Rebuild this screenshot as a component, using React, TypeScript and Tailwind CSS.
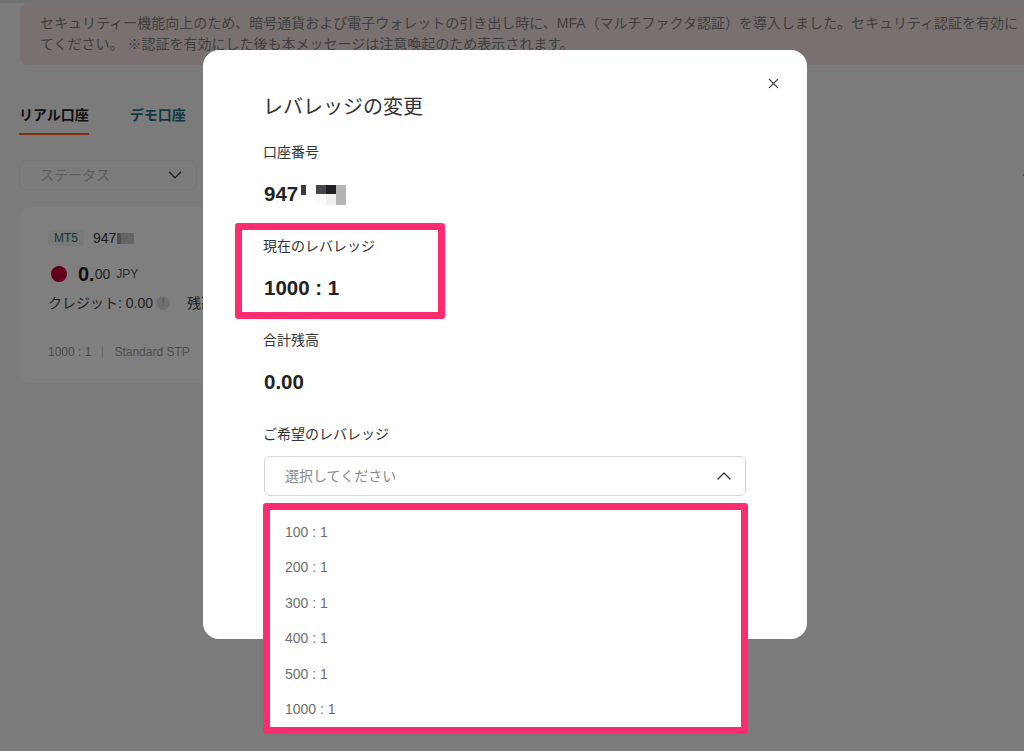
import { ChevronDown, ChevronUp, Plus, X } from 'lucide-react';

const leverageOptions = ['100 : 1', '200 : 1', '300 : 1', '400 : 1', '500 : 1', '1000 : 1'];

function AccountCard() {
  return (
    <div className="mt-[17px] ml-[19px] h-[176px] w-[500px] rounded-xl bg-white pt-[21px] pl-[29px]">
      <div className="flex items-center">
        <span className="flex h-[16px] w-[36px] items-center justify-center rounded-sm bg-[#f0f2f2] text-xs text-[#2f6f7d]">
          MT5
        </span>
        <span className="ml-[9px] text-sm text-[#333]">947</span>
        <span className="ml-[1px] flex h-[11px] w-[17px] bg-[#c8c8c8]">
          <span className="h-full w-1 bg-[#a0a0a0]" />
        </span>
      </div>
      <div className="mt-[14px] flex items-center">
        <span className="ml-[3px] size-4 rounded-full bg-[#c6003d]" />
        <span className="ml-[11px] text-xl leading-6 font-bold text-[#222]">0.</span>
        <span className="text-sm leading-6 text-[#444]">00</span>
        <span className="ml-[6px] text-xs leading-6 text-[#555]">JPY</span>
      </div>
      <div className="mt-[7px] flex items-center text-sm leading-5 text-[#444]">
        <span>クレジット: 0.00</span>
        <span className="ml-[3px] flex size-[14px] items-center justify-center rounded-full bg-[#e0e0e0] text-[10px] text-[#999]">
          !
        </span>
        <span className="ml-[17px]">残高: 0.00</span>
      </div>
      <div className="mt-[29px] flex items-center text-xs leading-5 text-[#999]">
        <span>1000 : 1</span>
        <span className="mx-[11px] h-3 w-px bg-[#ddd]" />
        <span>Standard STP</span>
      </div>
    </div>
  );
}

function MaskedNumber() {
  return (
    <div className="mt-[2px] ml-[3px] flex items-start">
      <div className="h-[10px] w-[5px] bg-[#3a3a40]" />
      <div className="ml-[10px] grid grid-cols-[10px_10px_10px] grid-rows-[9px_11px]">
        <div className="bg-[#45454e]" />
        <div className="bg-[#1f1f26]" />
        <div className="bg-[#b4b4b4]" />
        <div className="bg-[#fafafa]" />
        <div className="bg-[#efefef]" />
        <div className="bg-[#b4b4b4]" />
      </div>
    </div>
  );
}

function Field({ label, children }: { label: string; children: React.ReactNode }) {
  return (
    <div className="h-[94px]">
      <div className="-ml-px text-sm leading-[22px] text-[#333]">{label}</div>
      <div className="mt-[17px] flex h-7 items-center text-[20.5px] leading-7 font-bold text-[#222]">
        {children}
      </div>
    </div>
  );
}

export default function App() {
  return (
    <div className="relative h-[751px] w-[1024px] overflow-hidden bg-[#f7f7f7] font-['Liberation_Sans','Noto_Sans_CJK_JP',sans-serif]">
      {/* page behind the dialog */}
      <div className="h-[3px] bg-[#e2e2e2]" />
      <div className="ml-[20px] h-[62px] w-[1040px] rounded-lg bg-[#f3e3e0] px-5 py-[10px] text-sm leading-[21px] whitespace-nowrap text-[#7f7f7f]">
        <p>
          セキュリティー機能向上のため、暗号通貨および電子ウォレットの引き出し時に、MFA（マルチファクタ認証）を導入しました。セキュリティ認証を有効に
        </p>
        <p>てください。 ※認証を有効にした後も本メッセージは注意喚起のため表示されます。</p>
      </div>

      <div className="mt-[39px] ml-[19px] flex gap-[41px] text-sm font-bold">
        <div className="h-[31px] border-b-2 border-[#ff5a26] leading-[22px] text-[#222]">リアル口座</div>
        <div className="leading-[22px] text-[#28707f]">デモ口座</div>
      </div>

      <div className="mt-[25px] ml-[19px] flex items-center justify-between">
        <div className="flex h-[30px] w-[178px] items-center justify-between rounded-md border border-[#ececec] pr-[10px] pl-[20px] text-sm text-[#bbb]">
          ステータス
          <ChevronDown size={22} strokeWidth={1.5} className="text-[#444]" />
        </div>
        <Plus size={16} className="mr-[-12px] text-[#ff5a26]" />
      </div>

      <AccountCard />

      <div className="absolute inset-0 bg-black/50" />

      {/* dialog */}
      <div className="absolute top-[50px] left-[203px] h-[589px] w-[604px] rounded-2xl bg-white pt-[45px] pr-[61px] pl-[61px]">
        <X size={17} strokeWidth={1.5} className="absolute top-[25px] right-[25px] text-[#444]" />
        <h2 className="-ml-px text-xl leading-6 font-normal text-[#333]">レバレッジの変更</h2>
        <div className="mt-[22px]">
          <Field label="口座番号">
            <span>947</span>
            <MaskedNumber />
          </Field>
          <Field label="現在のレバレッジ">1000 : 1</Field>
          <Field label="合計残高">0.00</Field>
        </div>
        <div className="-ml-px text-sm leading-[22px] text-[#333]">ご希望のレバレッジ</div>
        <div className="mt-[11px] flex h-[40px] items-center justify-between rounded-md border border-[#d4d4d4] pr-[9px] pb-[1px] pl-[20px] text-sm text-[#888]">
          選択してください
          <ChevronUp size={24} strokeWidth={1.3} className="text-[#333]" />
        </div>
      </div>

      {/* annotation frame over current leverage */}
      <div className="absolute top-[223px] left-[235px] h-[96px] w-[210px] rounded-[3px] border-[7px] border-[#ff2d6f]" />

      {/* dropdown, framed by the annotation */}
      <div className="absolute top-[503px] left-[263px] h-[231px] w-[485px] rounded-[3px] border-[7px] border-[#ff2d6f] bg-white pt-[5px] pl-[15px] text-sm text-[#6e6e6e]">
        {leverageOptions.map((option) => (
          <div key={option} className="h-[35.4px] leading-[35.4px]">
            {option}
          </div>
        ))}
      </div>
    </div>
  );
}
